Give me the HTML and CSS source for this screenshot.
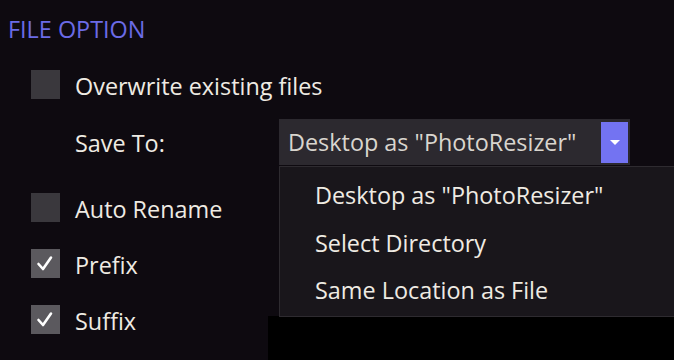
FILE: index.html
```html
<!DOCTYPE html>
<html lang="en">
<head>
    <meta charset="UTF-8">
    <title>File Option</title>
    <link rel="stylesheet" href="styles.css">
</head>
<body>
    <!-- 文件选项面板 -->
    <div class="panel">
        <h2 class="title">FILE OPTION</h2>

        <div class="options">
            <label class="check-row">
                <span class="box"></span>
                <span class="text">Overwrite existing files</span>
            </label>

            <div class="save-row">
                <span class="save-label">Save To:</span>
                <div class="select">
                    <span class="select-text">Desktop as "PhotoResizer"</span>
                    <span class="select-btn"><span class="arrow"></span></span>
                </div>
            </div>

            <label class="check-row">
                <span class="box"></span>
                <span class="text">Auto Rename</span>
            </label>
            <label class="check-row">
                <span class="box checked">
                    <svg width="29" height="29" viewBox="0 0 29 29"><polyline points="7.5,15 12,20 20,8.5" /></svg>
                </span>
                <span class="text">Prefix</span>
            </label>
            <label class="check-row">
                <span class="box checked">
                    <svg width="29" height="29" viewBox="0 0 29 29"><polyline points="7.5,15 12,20 20,8.5" /></svg>
                </span>
                <span class="text">Suffix</span>
            </label>
        </div>
    </div>

    <!-- 后面的黑色区域 -->
    <div class="backdrop"></div>

    <!-- 下拉菜单 -->
    <ul class="menu">
        <li>Desktop as "PhotoResizer"</li>
        <li>Select Directory</li>
        <li>Same Location as File</li>
    </ul>
</body>
</html>
```

FILE: styles.css
```css
* { box-sizing: border-box; }
body {
    margin: 0;
    height: 360px;
    overflow: hidden;
    background: #0e0a10;
    color: #efebe3;
    font-family: "Open Sans", "Liberation Sans", sans-serif;
    font-size: 23.4px;
}

/* 标题 */
.title {
    margin: 0;
    padding: 13px 0 0 8px;
    height: 70px;
    font-size: 23.4px;
    font-weight: normal;
    line-height: 32px;
    color: #6b6be6;
}

/* 选项列表 */
.options {
    padding-left: 31px;
}
.check-row {
    display: flex;
    align-items: center;
    gap: 15px;
    height: 29px;
    margin-bottom: 27px;
    line-height: 29px;
}
.check-row:first-child { margin-bottom: 20px; }
.check-row .text { padding-top: 4px; }
.box {
    width: 29px;
    height: 29px;
    background: #3a383d;
}
.box.checked { background: #5b595e; }
.box svg { display: block; }
.box polyline {
    fill: none;
    stroke: #fff;
    stroke-width: 2.6;
    stroke-linecap: round;
    stroke-linejoin: round;
}

/* 保存位置 */
.save-row {
    display: flex;
    align-items: center;
    height: 46px;
    margin-bottom: 28px;
    padding-left: 44px;
}
.save-label {
    width: 204px;
    padding-top: 2px;
}
.select {
    display: flex;
    align-items: center;
    justify-content: space-between;
    width: 351px;
    height: 46px;
    padding: 3px 2px 3px 9px;
    background: #2c292f;
    color: #d9d5ce;
}
.select-btn {
    display: flex;
    align-items: center;
    justify-content: center;
    width: 27px;
    height: 41px;
    background: #7373f2;
}
.arrow {
    width: 0;
    height: 0;
    border-left: 5px solid transparent;
    border-right: 5px solid transparent;
    border-top: 5px solid #fff;
}

/* 黑色背景块 */
.backdrop {
    position: absolute;
    left: 268px;
    top: 316px;
    right: 0;
    bottom: 0;
    background: #000;
}

/* 下拉菜单 */
.menu {
    position: absolute;
    left: 279px;
    top: 166px;
    width: 420px;
    height: 151px;
    margin: 0;
    padding: 5px 0 0 35px;
    list-style: none;
    background: #19161b;
    border: 1px solid #2e2b30;
}
.menu li {
    height: 47.5px;
    line-height: 47.5px;
}
```
